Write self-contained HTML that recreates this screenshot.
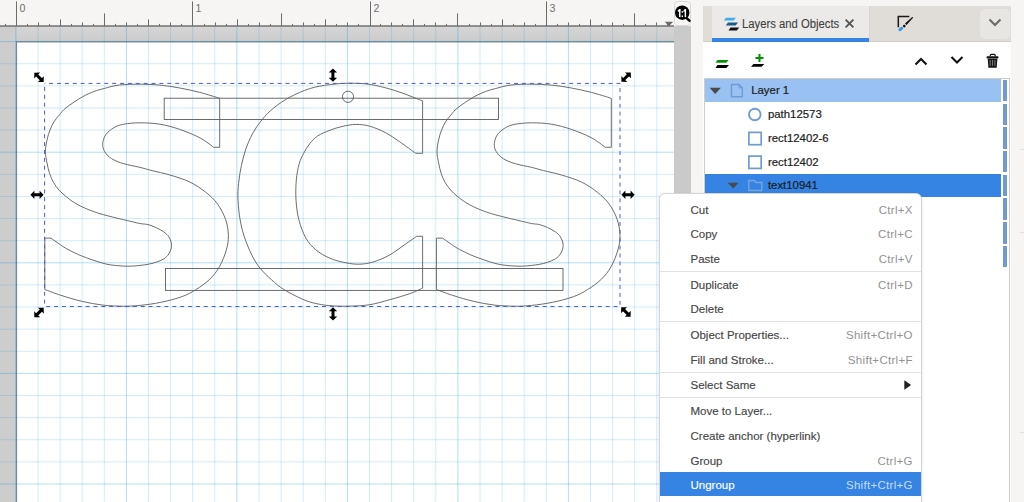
<!DOCTYPE html>
<html><head><meta charset="utf-8">
<style>
html,body{margin:0;padding:0;}
body{width:1024px;height:502px;overflow:hidden;position:relative;background:#f6f5f4;font-family:"Liberation Sans",sans-serif;}
.abs{position:absolute;}
.mi{position:absolute;left:690.5px;font-size:11.5px;color:#464646;-webkit-text-stroke:0.15px currentColor;white-space:nowrap;line-height:1;}
.sc{position:absolute;right:111.2px;font-size:11.5px;color:#929292;letter-spacing:0.3px;white-space:nowrap;line-height:1;}
.sep{position:absolute;left:660px;width:261px;height:1px;background:#e2e2e2;}
.row{position:absolute;left:705px;width:296px;height:23.7px;}
.bar{position:absolute;left:1003.3px;width:4px;background:#6f9bd1;}
.tt{position:absolute;left:767.9px;font-size:11.4px;color:#1c1c1c;-webkit-text-stroke:0.2px #1c1c1c;white-space:nowrap;line-height:1;}
</style></head><body>
<svg width="674" height="502" viewBox="0 0 674 502" style="position:absolute;left:0;top:0">
<defs>
<linearGradient id="desk" x1="0" y1="0" x2="0" y2="1"><stop offset="0" stop-color="#d6d6d6"/><stop offset="1" stop-color="#cbcbcb"/></linearGradient>
</defs>
<rect x="0" y="0" width="674" height="26" fill="#f6f5f4"/>
<rect x="0" y="26" width="674" height="476" fill="#cdcdcd"/>
<rect x="16.5" y="26" width="660" height="16" fill="url(#desk)"/>
<rect x="16.5" y="41.8" width="660" height="470" fill="#ffffff"/>
<path d="M38.00 26V502 M60.10 26V502 M82.20 26V502 M104.30 26V502 M148.50 26V502 M170.60 26V502 M192.70 26V502 M214.80 26V502 M259.00 26V502 M281.10 26V502 M303.20 26V502 M325.30 26V502 M369.50 26V502 M391.60 26V502 M413.70 26V502 M435.80 26V502 M480.00 26V502 M502.10 26V502 M524.20 26V502 M546.30 26V502 M590.50 26V502 M612.60 26V502 M634.70 26V502 M656.80 26V502 M0 63.72H674 M0 85.84H674 M0 107.96H674 M0 130.08H674 M0 174.32H674 M0 196.44H674 M0 218.56H674 M0 240.68H674 M0 284.92H674 M0 307.04H674 M0 329.16H674 M0 351.28H674 M0 395.52H674 M0 417.64H674 M0 439.76H674 M0 461.88H674" stroke="rgba(0,150,228,0.18)" stroke-width="1" fill="none"/>
<path d="M15.90 26V502 M126.40 26V502 M236.90 26V502 M347.40 26V502 M457.90 26V502 M568.40 26V502 M0 41.60H674 M0 152.20H674 M0 262.80H674 M0 373.40H674 M0 484.00H674" stroke="rgba(0,150,228,0.31)" stroke-width="1" fill="none"/>
<path d="M16.5 502V41.8H674" stroke="rgba(40,70,90,0.55)" stroke-width="1.2" fill="none"/>
<path d="M0 26H674" stroke="#707070" stroke-width="1.4"/>
<path d="M5.50 23.9V26 M16.50 1.4V26 M27.50 23.9V26 M38.50 22.4V26 M49.50 23.9V26 M60.50 19.4V26 M71.50 23.9V26 M82.50 22.4V26 M93.50 23.9V26 M104.50 13.4V26 M115.50 23.9V26 M126.50 22.4V26 M137.50 23.9V26 M148.50 19.4V26 M159.50 23.9V26 M170.50 22.4V26 M181.50 23.9V26 M192.50 1.4V26 M204.50 23.9V26 M215.50 22.4V26 M226.50 23.9V26 M237.50 19.4V26 M248.50 23.9V26 M259.50 22.4V26 M270.50 23.9V26 M281.50 13.4V26 M292.50 23.9V26 M303.50 22.4V26 M314.50 23.9V26 M325.50 19.4V26 M336.50 23.9V26 M347.50 22.4V26 M358.50 23.9V26 M370.50 1.4V26 M380.50 23.9V26 M391.50 22.4V26 M402.50 23.9V26 M413.50 19.4V26 M424.50 23.9V26 M435.50 22.4V26 M446.50 23.9V26 M457.50 13.4V26 M469.50 23.9V26 M480.50 22.4V26 M491.50 23.9V26 M502.50 19.4V26 M513.50 23.9V26 M524.50 22.4V26 M535.50 23.9V26 M546.50 1.4V26 M557.50 23.9V26 M568.50 22.4V26 M579.50 23.9V26 M590.50 19.4V26 M601.50 23.9V26 M612.50 22.4V26 M623.50 23.9V26 M634.50 13.4V26 M645.50 23.9V26 M656.50 22.4V26 M667.50 23.9V26" stroke="#6c6c6c" stroke-width="1" fill="none"/>
<g font-family="Liberation Sans, sans-serif" font-size="10.6" fill="#6e6e6e"><text x="19.5" y="12.2" >0</text><text x="195.5" y="12.2" >1</text><text x="373.5" y="12.2" >2</text><text x="549.5" y="12.2" >3</text></g>
<path d="M664.7 21.8H673.1L668.9 26.2Z" fill="#6a6a6a"/>
<g fill="none" stroke="#5c5c5c" stroke-width="0.9">
<path d="M219.7 98.3 C216.4 97.3 206.5 94.1 199.8 92.4 C193.2 90.7 186.5 89.2 179.8 88.0 C173.2 86.8 166.5 85.7 159.9 85.1 C153.3 84.5 146.8 84.2 140.0 84.2 C133.2 84.2 125.3 84.3 119.3 85.0 C113.3 85.7 108.3 87.4 104.1 88.5 C99.9 89.6 97.6 90.1 94.0 91.5 C90.4 92.9 87.0 94.2 82.3 96.9 C77.6 99.6 69.7 104.9 65.9 107.9 C62.1 110.9 61.4 112.6 59.4 114.9 C57.4 117.2 55.6 119.3 54.0 121.8 C52.4 124.3 51.2 127.0 50.0 130.0 C48.8 133.0 47.8 136.3 47.0 140.0 C46.2 143.7 45.4 148.1 45.4 151.9 C45.4 155.7 46.3 159.3 47.0 162.9 C47.7 166.5 48.5 170.2 49.6 173.5 C50.7 176.8 52.0 179.8 53.6 182.6 C55.2 185.4 57.1 187.8 59.1 190.1 C61.1 192.3 63.1 194.1 65.5 196.1 C67.9 198.1 70.7 200.3 73.5 202.1 C76.3 203.9 79.2 205.4 82.2 206.9 C85.2 208.4 88.8 209.8 91.8 210.9 C94.8 212.0 96.0 212.5 100.0 213.7 C104.0 214.9 111.5 216.8 115.9 217.9 C120.3 219.0 122.3 219.4 126.3 220.3 C130.3 221.2 136.2 222.8 139.8 223.5 C143.4 224.2 145.3 223.9 148.0 224.6 C150.7 225.3 153.2 226.3 155.9 227.5 C158.6 228.7 161.7 230.4 163.9 232.0 C166.1 233.6 167.7 235.1 168.9 236.9 C170.1 238.7 170.9 241.1 171.3 242.9 C171.7 244.7 171.7 246.1 171.3 247.9 C170.9 249.7 170.1 252.1 168.9 253.9 C167.7 255.7 166.1 257.4 163.9 258.8 C161.7 260.2 158.6 261.4 155.9 262.3 C153.2 263.2 150.7 263.8 148.0 264.3 C145.3 264.8 143.1 265.1 140.0 265.4 C136.9 265.7 133.5 266.2 129.6 266.2 C125.7 266.2 121.2 266.1 116.7 265.6 C112.2 265.1 108.6 264.8 102.8 263.2 C97.0 261.6 87.6 258.3 81.8 256.0 C76.0 253.7 71.6 251.3 67.9 249.4 C64.2 247.5 62.7 246.3 59.9 244.4 C57.1 242.5 52.5 239.2 51.0 238.1 L44.8 238.1 L44.8 289.5 C47.5 290.5 54.7 293.3 60.9 295.3 C67.1 297.3 74.8 299.7 81.8 301.3 C88.8 302.9 95.8 304.3 102.8 305.1 C109.8 305.9 117.5 306.1 123.7 306.2 C129.9 306.2 133.8 306.0 140.0 305.4 C146.2 304.8 153.9 303.8 160.9 302.3 C167.9 300.9 176.0 298.8 181.8 296.7 C187.6 294.6 191.2 292.6 195.8 289.7 C200.5 286.8 205.8 283.1 209.7 279.3 C213.6 275.5 216.7 271.6 219.5 266.7 C222.3 261.8 224.8 255.2 226.3 250.0 C227.8 244.8 228.5 240.7 228.4 235.7 C228.3 230.7 227.5 225.1 225.7 219.8 C223.9 214.6 221.0 208.8 217.7 204.2 C214.4 199.6 210.3 195.9 205.7 192.2 C201.0 188.5 195.8 184.9 189.8 182.0 C183.8 179.1 176.2 176.9 169.9 175.0 C163.6 173.1 157.0 171.9 152.0 170.6 C147.0 169.3 144.5 168.5 139.8 167.3 C135.1 166.2 128.4 165.1 123.7 163.7 C119.0 162.3 114.9 160.7 111.7 158.7 C108.5 156.7 106.2 154.2 104.7 151.7 C103.2 149.2 102.5 146.5 102.7 143.7 C102.9 140.9 103.9 137.5 105.7 134.8 C107.5 132.2 110.7 129.6 113.7 127.8 C116.7 126.0 119.3 125.0 123.7 124.2 C128.1 123.4 134.0 122.8 140.0 122.8 C146.0 122.8 153.3 123.1 159.9 124.2 C166.5 125.3 173.2 127.1 179.8 129.4 C186.5 131.7 194.2 134.8 199.8 137.8 C205.5 140.8 211.4 145.7 213.7 147.3 L219.7 147.3 L219.7 98.3 Z"/>
<path d="M219.7 98.3 C216.4 97.3 206.5 94.1 199.8 92.4 C193.2 90.7 186.5 89.2 179.8 88.0 C173.2 86.8 166.5 85.7 159.9 85.1 C153.3 84.5 146.8 84.2 140.0 84.2 C133.2 84.2 125.3 84.3 119.3 85.0 C113.3 85.7 108.3 87.4 104.1 88.5 C99.9 89.6 97.6 90.1 94.0 91.5 C90.4 92.9 87.0 94.2 82.3 96.9 C77.6 99.6 69.7 104.9 65.9 107.9 C62.1 110.9 61.4 112.6 59.4 114.9 C57.4 117.2 55.6 119.3 54.0 121.8 C52.4 124.3 51.2 127.0 50.0 130.0 C48.8 133.0 47.8 136.3 47.0 140.0 C46.2 143.7 45.4 148.1 45.4 151.9 C45.4 155.7 46.3 159.3 47.0 162.9 C47.7 166.5 48.5 170.2 49.6 173.5 C50.7 176.8 52.0 179.8 53.6 182.6 C55.2 185.4 57.1 187.8 59.1 190.1 C61.1 192.3 63.1 194.1 65.5 196.1 C67.9 198.1 70.7 200.3 73.5 202.1 C76.3 203.9 79.2 205.4 82.2 206.9 C85.2 208.4 88.8 209.8 91.8 210.9 C94.8 212.0 96.0 212.5 100.0 213.7 C104.0 214.9 111.5 216.8 115.9 217.9 C120.3 219.0 122.3 219.4 126.3 220.3 C130.3 221.2 136.2 222.8 139.8 223.5 C143.4 224.2 145.3 223.9 148.0 224.6 C150.7 225.3 153.2 226.3 155.9 227.5 C158.6 228.7 161.7 230.4 163.9 232.0 C166.1 233.6 167.7 235.1 168.9 236.9 C170.1 238.7 170.9 241.1 171.3 242.9 C171.7 244.7 171.7 246.1 171.3 247.9 C170.9 249.7 170.1 252.1 168.9 253.9 C167.7 255.7 166.1 257.4 163.9 258.8 C161.7 260.2 158.6 261.4 155.9 262.3 C153.2 263.2 150.7 263.8 148.0 264.3 C145.3 264.8 143.1 265.1 140.0 265.4 C136.9 265.7 133.5 266.2 129.6 266.2 C125.7 266.2 121.2 266.1 116.7 265.6 C112.2 265.1 108.6 264.8 102.8 263.2 C97.0 261.6 87.6 258.3 81.8 256.0 C76.0 253.7 71.6 251.3 67.9 249.4 C64.2 247.5 62.7 246.3 59.9 244.4 C57.1 242.5 52.5 239.2 51.0 238.1 L44.8 238.1 L44.8 289.5 C47.5 290.5 54.7 293.3 60.9 295.3 C67.1 297.3 74.8 299.7 81.8 301.3 C88.8 302.9 95.8 304.3 102.8 305.1 C109.8 305.9 117.5 306.1 123.7 306.2 C129.9 306.2 133.8 306.0 140.0 305.4 C146.2 304.8 153.9 303.8 160.9 302.3 C167.9 300.9 176.0 298.8 181.8 296.7 C187.6 294.6 191.2 292.6 195.8 289.7 C200.5 286.8 205.8 283.1 209.7 279.3 C213.6 275.5 216.7 271.6 219.5 266.7 C222.3 261.8 224.8 255.2 226.3 250.0 C227.8 244.8 228.5 240.7 228.4 235.7 C228.3 230.7 227.5 225.1 225.7 219.8 C223.9 214.6 221.0 208.8 217.7 204.2 C214.4 199.6 210.3 195.9 205.7 192.2 C201.0 188.5 195.8 184.9 189.8 182.0 C183.8 179.1 176.2 176.9 169.9 175.0 C163.6 173.1 157.0 171.9 152.0 170.6 C147.0 169.3 144.5 168.5 139.8 167.3 C135.1 166.2 128.4 165.1 123.7 163.7 C119.0 162.3 114.9 160.7 111.7 158.7 C108.5 156.7 106.2 154.2 104.7 151.7 C103.2 149.2 102.5 146.5 102.7 143.7 C102.9 140.9 103.9 137.5 105.7 134.8 C107.5 132.2 110.7 129.6 113.7 127.8 C116.7 126.0 119.3 125.0 123.7 124.2 C128.1 123.4 134.0 122.8 140.0 122.8 C146.0 122.8 153.3 123.1 159.9 124.2 C166.5 125.3 173.2 127.1 179.8 129.4 C186.5 131.7 194.2 134.8 199.8 137.8 C205.5 140.8 211.4 145.7 213.7 147.3 L219.7 147.3 L219.7 98.3 Z" transform="translate(391.6 0)"/>
<path d="M422.6 100.9 C421.8 100.6 420.4 100.0 417.6 98.9 C414.8 97.8 410.3 96.0 405.7 94.3 C401.1 92.6 395.8 90.7 389.8 89.0 C383.8 87.3 376.5 85.4 369.8 84.4 C363.1 83.4 356.6 83.2 349.9 83.2 C343.2 83.2 336.5 83.7 329.8 84.6 C323.1 85.5 316.4 86.5 309.7 88.6 C303.0 90.7 295.8 94.0 289.8 97.2 C283.8 100.4 278.5 104.1 273.8 107.9 C269.1 111.7 265.4 115.5 261.9 119.8 C258.3 124.1 255.2 128.8 252.5 133.8 C249.8 138.8 247.3 144.7 245.5 150.0 C243.7 155.3 242.5 160.7 241.4 165.7 C240.3 170.7 239.6 175.0 239.0 180.0 C238.4 185.0 237.8 189.5 237.9 195.5 C238.0 201.5 238.5 209.2 239.5 215.9 C240.5 222.6 241.9 229.2 244.0 235.8 C246.1 242.4 249.2 249.8 251.9 255.2 C254.6 260.6 256.6 263.9 259.9 268.0 C263.2 272.1 267.8 276.4 271.8 280.0 C275.8 283.6 278.8 286.4 283.8 289.5 C288.8 292.6 296.7 296.6 301.7 298.8 C306.7 301.1 308.9 301.9 313.6 303.0 C318.3 304.1 323.9 305.2 330.0 305.7 C336.1 306.2 343.3 306.3 349.9 306.1 C356.5 305.9 363.1 305.8 369.8 304.7 C376.5 303.6 383.2 301.5 389.8 299.7 C396.4 297.9 404.2 295.6 409.7 293.7 C415.2 291.8 420.5 289.0 422.6 288.1 L422.6 236.3 L416.7 236.3 C414.9 237.6 410.2 240.8 405.7 243.9 C401.2 247.0 395.1 251.9 389.8 254.9 C384.5 257.9 378.8 260.2 373.8 261.8 C368.8 263.4 364.5 264.0 359.9 264.2 C355.2 264.4 350.9 263.8 345.9 262.8 C340.9 261.8 334.8 260.4 329.8 258.2 C324.8 256.0 319.7 253.1 315.7 249.7 C311.7 246.3 308.5 242.8 305.7 237.8 C302.9 232.8 300.5 226.1 298.9 219.8 C297.3 213.5 296.4 206.6 296.0 200.0 C295.6 193.4 295.8 186.1 296.3 180.0 C296.8 173.9 298.0 168.1 299.2 163.7 C300.4 159.2 301.9 156.6 303.7 153.3 C305.4 150.0 307.4 146.6 309.7 143.7 C312.0 140.8 314.2 138.2 317.6 136.0 C321.0 133.8 325.9 131.8 330.0 130.2 C334.1 128.6 337.7 127.5 342.0 126.5 C346.3 125.5 351.3 124.5 355.9 124.4 C360.5 124.4 364.8 124.8 369.8 126.2 C374.8 127.6 380.8 130.2 385.8 132.8 C390.8 135.4 394.7 138.4 399.7 141.8 C404.7 145.2 413.0 151.4 415.7 153.3 L422.6 153.3 L422.6 100.9 Z"/>
<rect x="164.2" y="98.2" width="334.3" height="21.3"/>
<rect x="165.5" y="268.5" width="397.5" height="21.9"/>
<circle cx="348" cy="96.8" r="5.6"/>
</g>
<g fill="none" stroke="#5656d8" stroke-width="1">
<path d="M44.6 83.4H620" stroke-dasharray="4 3.88" stroke-dashoffset="3.38"/>
<path d="M44.6 306.5H620" stroke-dasharray="4 3.88" stroke-dashoffset="6.28"/>
<path d="M44.6 83.4V306.5" stroke-dasharray="4 3.88" stroke-dashoffset="4.38"/>
<path d="M620 83.4V306.5" stroke-dasharray="4 3.88" stroke-dashoffset="3.28"/>
</g>
<g fill="#000">
<!-- corner handles -->
<g transform="translate(39 77.3) rotate(45)"><path d="M-6.6 0 L-2.6 -4.2 V-1.5 H2.6 V-4.2 L6.6 0 L2.6 4.2 V1.5 H-2.6 V4.2Z"/></g>
<g transform="translate(626.1 77.2) rotate(-45)"><path d="M-6.6 0 L-2.6 -4.2 V-1.5 H2.6 V-4.2 L6.6 0 L2.6 4.2 V1.5 H-2.6 V4.2Z"/></g>
<g transform="translate(39 312.5) rotate(-45)"><path d="M-6.6 0 L-2.6 -4.2 V-1.5 H2.6 V-4.2 L6.6 0 L2.6 4.2 V1.5 H-2.6 V4.2Z"/></g>
<g transform="translate(625.9 312) rotate(45)"><path d="M-6.6 0 L-2.6 -4.2 V-1.5 H2.6 V-4.2 L6.6 0 L2.6 4.2 V1.5 H-2.6 V4.2Z"/></g>
<g transform="translate(37 194.85) rotate(0)"><path d="M-6.6 0 L-2.6 -4.2 V-1.5 H2.6 V-4.2 L6.6 0 L2.6 4.2 V1.5 H-2.6 V4.2Z"/></g>
<g transform="translate(628 194.8) rotate(0)"><path d="M-6.6 0 L-2.6 -4.2 V-1.5 H2.6 V-4.2 L6.6 0 L2.6 4.2 V1.5 H-2.6 V4.2Z"/></g>
<g transform="translate(332.9 75.2) rotate(90)"><path d="M-6.6 0 L-2.6 -4.2 V-1.5 H2.6 V-4.2 L6.6 0 L2.6 4.2 V1.5 H-2.6 V4.2Z"/></g>
<g transform="translate(333 313.8) rotate(90)"><path d="M-6.6 0 L-2.6 -4.2 V-1.5 H2.6 V-4.2 L6.6 0 L2.6 4.2 V1.5 H-2.6 V4.2Z"/></g>
</g>
</svg>
<!-- gray column -->
<div class="abs" style="left:674px;top:26px;width:17px;height:476px;background:#cacaca"></div>
<!-- zoom button -->
<div class="abs" style="left:674.3px;top:1.4px;width:17px;height:25px;border:1px solid #dcd7d2;border-radius:4px;background:#f8f7f6;box-sizing:border-box"></div>
<svg class="abs" style="left:674px;top:0px" width="18" height="26" viewBox="674 0 18 26">
<line x1="685.5" y1="17" x2="689.6" y2="20.8" stroke="#000" stroke-width="2.4" stroke-linecap="round"/>
<circle cx="682.2" cy="12.7" r="7.2" fill="#000"/>
<g fill="#fff">
<rect x="679" y="9.2" width="1.5" height="7.9"/><path d="M677.6 11L679 9.2H680.5V10.3L678.3 12Z"/>
<rect x="681.6" y="11.2" width="1.4" height="1.5"/><rect x="681.6" y="15.5" width="1.4" height="1.5"/>
<rect x="684.6" y="9.2" width="1.5" height="7.9"/><path d="M683.2 11L684.6 9.2H686.1V10.3L683.9 12Z"/>
</g>
</svg>
<!-- panel -->
<div class="abs" style="left:703px;top:6px;width:308px;height:36px;background:#e0dcd8;border-bottom:1px solid #d2cdc8;box-sizing:border-box"></div>
<div class="abs" style="left:869px;top:6px;width:1px;height:35px;background:#d8d4d0"></div>
<div class="abs" style="left:712px;top:6px;width:157px;height:35px;background:#ebeae8"></div>
<div class="abs" style="left:712px;top:38px;width:157px;height:4px;background:#3584e4"></div>
<div class="abs" style="left:980px;top:9px;width:30px;height:30px;border-radius:5px;background:#e8e6e3"></div>
<svg class="abs" style="left:988px;top:18px" width="15" height="10" viewBox="0 0 15 10"><path d="M1.5 1.5L7 7L12.5 1.5" fill="none" stroke="#6a6a6a" stroke-width="2"/></svg>
<!-- layers icon -->
<svg class="abs" style="left:723px;top:16px" width="18" height="16" viewBox="0 0 18 16">
<path d="M3 1.7H13L10.6 4.5H0.8Z" fill="#3daee9"/>
<path d="M5 6.5H15L12.6 9.5H2.8Z" fill="#1d5a85"/>
<path d="M7.5 11.5H16.2L13.8 14.6H5.5Z" fill="#111"/>
</svg>
<div class="abs" style="left:742.4px;top:18px;font-size:12px;color:#404040;-webkit-text-stroke:0.1px #404040;white-space:nowrap;transform:scaleX(0.94);transform-origin:0 0;line-height:1">Layers and Objects</div>
<svg class="abs" style="left:843.7px;top:18px" width="11" height="11" viewBox="0 0 11 11"><path d="M1.6 1.6L9.4 9.4M9.4 1.6L1.6 9.4" stroke="#555" stroke-width="1.9"/></svg>
<!-- fill stroke icon -->
<svg class="abs" style="left:894px;top:12px" width="22" height="22" viewBox="894 12 22 22">
<path d="M898.3 27.2V16.4H909.3" fill="none" stroke="#1a1a1a" stroke-width="1.5"/>
<path d="M913.3 17.6L912.2 16.9L905 23.6L906.6 25.1Z" fill="#111"/>
<circle cx="904.3" cy="26.1" r="1.3" fill="#111"/>
<ellipse cx="900.8" cy="29" rx="2.7" ry="1.6" transform="rotate(-35 900.8 29)" fill="#2f9ee8"/>
</svg>
<div class="abs" style="left:703px;top:42px;width:308px;height:460px;background:#fff"></div>
<!-- toolbar icons -->
<svg class="abs" style="left:713px;top:56px" width="20" height="14" viewBox="0 0 20 14">
<path d="M4.5 4H15.7L13.2 6.8H2.5Z" fill="#0a8f0a"/>
<path d="M4.5 9.1H16L13.3 11.9H2.5Z" fill="#000"/>
</svg>
<svg class="abs" style="left:749px;top:52px" width="20" height="16" viewBox="0 0 20 16">
<path d="M10.5 2V10M6.5 6H14.5" stroke="#0a8f0a" stroke-width="2.1"/>
<path d="M4.5 12H15.3L12.6 14.8H2Z" fill="#000"/>
</svg>
<svg class="abs" style="left:913px;top:54px" width="16" height="14" viewBox="0 0 16 14"><path d="M2.5 10.5L8 5L13.5 10.5" fill="none" stroke="#111" stroke-width="2.1"/></svg>
<svg class="abs" style="left:949px;top:53px" width="16" height="14" viewBox="0 0 16 14"><path d="M2.5 4L8 9.5L13.5 4" fill="none" stroke="#111" stroke-width="2.1"/></svg>
<svg class="abs" style="left:984px;top:52px" width="18" height="18" viewBox="984 52 18 18">
<path d="M990.2 56.3V55.6Q990.2 54.4 991.4 54.4H994Q995.2 54.4 995.2 55.6V56.3" fill="none" stroke="#111" stroke-width="1.2"/>
<rect x="986.6" y="56.2" width="11.8" height="2.2" rx="0.6" fill="#111"/>
<path d="M987.7 58.8H997.4L996.7 67.7H988.4Z" fill="#161616"/>
<path d="M990.2 60V65.8M992.55 60V65.8M994.9 60V65.8" stroke="#8a8a8a" stroke-width="0.9"/>
</svg>
<!-- tree frame -->
<div class="abs" style="left:704px;top:78px;width:306px;height:430px;border:1px solid #d0ccc8;box-sizing:border-box"></div>
<div class="row" style="top:78.6px;background:#99c1f1;width:296px"></div>
<div class="row" style="top:173.6px;background:#3584e4;width:296px"></div>
<div class="bar" style="top:79.8px;height:21.6px"></div>
<div class="bar" style="top:103.5px;height:21.6px"></div>
<div class="bar" style="top:127.2px;height:21.6px"></div>
<div class="bar" style="top:150.9px;height:21.6px"></div>
<div class="bar" style="top:174.6px;height:21.6px"></div>
<div class="bar" style="top:198.3px;height:21.6px"></div>
<div class="bar" style="top:222.0px;height:21.6px"></div>
<div class="bar" style="top:245.7px;height:21.6px"></div>

<svg class="abs" style="left:705px;top:78px" width="70" height="120" viewBox="0 0 70 120">
<path d="M4.6 9.7H15.9L10.25 15.9Z" fill="#4a4a4a"/>
<path d="M26.5 6.5H34L37.3 9.8V18.8H26.5Z" fill="none" stroke="#6f9bd1" stroke-width="1.4"/>
<path d="M34 6.5V9.8H37.3" fill="none" stroke="#6f9bd1" stroke-width="1"/>
<circle cx="49.8" cy="36.5" r="5.8" fill="none" stroke="#6f9bd1" stroke-width="1.9"/>
<rect x="43.9" y="54.4" width="12.3" height="12.3" fill="none" stroke="#6f9bd1" stroke-width="1.7"/>
<rect x="43.9" y="78.1" width="12.3" height="12.3" fill="none" stroke="#6f9bd1" stroke-width="1.7"/>
<path d="M22.6 104.8H33.6L28.1 110.5Z" fill="#4a4a4a"/>
<path d="M43.8 102.5H49.5L51 104.5H56.8V112.5H43.8Z" fill="none" stroke="#79a6dc" stroke-width="1.3"/>
</svg>
<div class="tt" style="left:751.2px;top:85px">Layer 1</div>
<div class="tt" style="top:109.2px">path12573</div>
<div class="tt" style="top:132.9px">rect12402-6</div>
<div class="tt" style="top:156.6px">rect12402</div>
<div class="tt" style="top:180.3px">text10941</div>
<div class="abs" style="left:659.2px;top:192.5px;width:262.5px;height:320px;background:#fff;border:1px solid #d6d6d6;border-radius:6px;box-sizing:border-box;box-shadow:0 1px 3px rgba(0,0,0,0.12)"></div>
<div class="abs" style="left:660px;top:472.3px;width:261px;height:24.2px;background:#3584e4"></div>
<div class="sep" style="top:270.5px"></div>
<div class="sep" style="top:320.6px"></div>
<div class="sep" style="top:371.7px"></div>
<div class="sep" style="top:397.2px"></div>
<div class="mi" style="top:204.8px">Cut</div>
<div class="sc" style="top:204.8px">Ctrl+X</div>
<div class="mi" style="top:229.3px">Copy</div>
<div class="sc" style="top:229.3px">Ctrl+C</div>
<div class="mi" style="top:253.7px">Paste</div>
<div class="sc" style="top:253.7px">Ctrl+V</div>
<div class="mi" style="top:279.9px">Duplicate</div>
<div class="sc" style="top:279.9px">Ctrl+D</div>
<div class="mi" style="top:304.1px">Delete</div>
<div class="mi" style="top:329.6px">Object Properties...</div>
<div class="sc" style="top:329.6px">Shift+Ctrl+O</div>
<div class="mi" style="top:354.6px">Fill and Stroke...</div>
<div class="sc" style="top:354.6px">Shift+Ctrl+F</div>
<div class="mi" style="top:380.1px">Select Same</div>
<div class="mi" style="top:405.6px">Move to Layer...</div>
<div class="mi" style="top:430.9px">Create anchor (hyperlink)</div>
<div class="mi" style="top:455.5px">Group</div>
<div class="sc" style="top:455.5px">Ctrl+G</div>
<div class="mi" style="top:479.7px;color:#ffffff">Ungroup</div>
<div class="sc" style="top:479.7px;color:#c6dcf6">Shift+Ctrl+G</div>
<svg class="abs" style="left:903px;top:379px" width="10" height="12" viewBox="0 0 10 12"><path d="M1.3 1.2L8.1 6L1.3 10.8Z" fill="#222"/></svg>
<div class="abs" style="left:1020px;top:232px;width:4px;height:1px;background:#e2e0dd"></div><div class="abs" style="left:1020px;top:149px;width:4px;height:1px;background:#e2e0dd"></div><div class="abs" style="left:1020px;top:432px;width:4px;height:1px;background:#e2e0dd"></div>
</body></html>
